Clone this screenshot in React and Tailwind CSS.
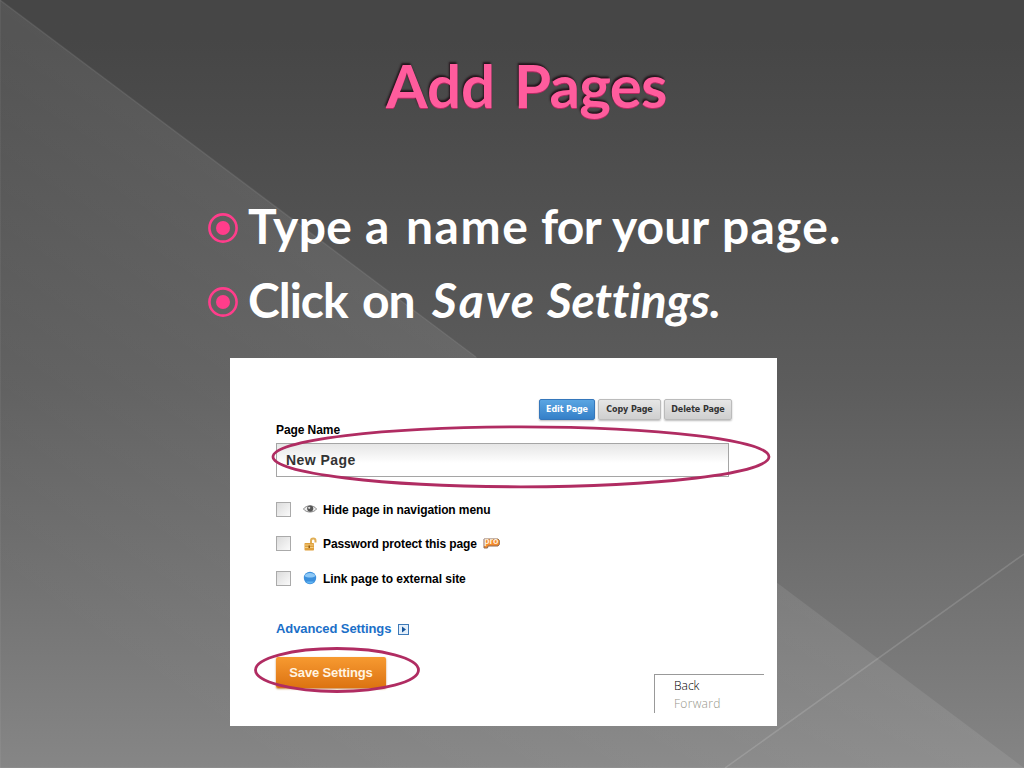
import React from 'react';

const Bullet = () => (
  <svg className="w-[30px] h-[30px] mt-[15px] mr-[10px] shrink-0" viewBox="0 0 30 30">
    <circle cx="15" cy="15" r="13.6" fill="none" stroke="#ff3d8b" strokeWidth="2.6" />
    <circle cx="15" cy="15" r="7" fill="#ff3d8b" />
  </svg>
);

const EyeIcon = () => (
  <svg className="w-[14px] h-[10px]" viewBox="0 0 14 10">
    <path d="M0.5 5C3 .8 11 .8 13.5 5C11 9 3 9 .5 5Z" fill="#eee" stroke="#888" strokeWidth="1" />
    <circle cx="7.2" cy="4.6" r="3.1" fill="#555" />
    <circle cx="6.2" cy="3.8" r="1.1" fill="#ddd" />
  </svg>
);

const LockIcon = () => (
  <svg className="w-[14px] h-[14px]" viewBox="0 0 14 14">
    <path d="M8 6.5V3.8C8 .8 12.5.8 12.5 3.8V5.5" fill="none" stroke="#e0ae55" strokeWidth="2" />
    <rect x="1.5" y="6" width="9.5" height="7.5" rx="0.8" fill="#dfa03c" />
    <path d="M2 8h8.5M2 10.5h8.5" stroke="#f3cf84" strokeWidth="1" />
    <rect x="5.5" y="8.5" width="1.5" height="2.5" fill="#8f5c18" />
  </svg>
);

const GlobeIcon = () => (
  <svg className="w-[14px] h-[14px]" viewBox="0 0 14 14">
    <circle cx="7" cy="7" r="6.2" fill="#3b8fdc" />
    <path d="M1.5 5C2.5 1 11.5 1 12.5 5C10 7 4 7 1.5 5Z" fill="#8dc8f6" />
    <path d="M3 10.5C5 13 9 13 11 10.5Z" fill="#63b6f3" />
  </svg>
);

const ProBadge = () => (
  <span className="relative ml-[6px] flex h-[11px] w-[17px] items-center justify-center">
    <svg className="absolute inset-0 w-full h-full" viewBox="0 0 17 11">
      <path d="M1 1H15L16.3 2.5V6.5L15 8H5L4.5 10H1Z" fill="#f58a2c" stroke="#8d6a55" strokeWidth="1" />
    </svg>
    <span className="relative -mt-[4px] text-[9px] leading-none font-bold text-[#fff1df]">pro</span>
  </span>
);

const OPTIONS = [
  { label: 'Hide page in navigation menu', icon: <EyeIcon />, spacing: 'tracking-[-0.09px]' },
  { label: 'Password protect this page', icon: <LockIcon />, spacing: 'tracking-[-0.11px]', badge: true },
  { label: 'Link page to external site', icon: <GlobeIcon />, spacing: 'tracking-[-0.05px]' }
];

const Background = () => (
  <svg className="absolute inset-0 w-full h-full" viewBox="0 0 1024 768">
    <defs>
      <linearGradient id="facet" gradientUnits="userSpaceOnUse" x1="400" y1="300" x2="130" y2="660">
        <stop offset="0" stopColor="#fff" stopOpacity="0.085" />
        <stop offset="1" stopColor="#fff" stopOpacity="0.01" />
      </linearGradient>
    </defs>
    <path d="M0 0L1024 768H0Z" fill="url(#facet)" />
    <path d="M0 0L476 357" stroke="#fff" strokeOpacity="0.08" strokeWidth="1.5" />
    <path d="M725 768L1024 554" stroke="#fff" strokeOpacity="0.14" strokeWidth="1.5" />
    <path d="M0.5 0V768M0 767.5H1024" stroke="#fff" strokeOpacity="0.05" />
  </svg>
);

const Panel = () => (
  <div className="relative ml-[230px] w-[547px] h-[368px] bg-white pl-[46px] pt-[41px] font-['Liberation_Sans',sans-serif] text-black">
    {/* Page actions */}
    <div className="flex gap-[3px] pl-[263px] font-['DejaVu_Sans',sans-serif] text-[8px] font-bold tracking-[-0.1px] text-[#333]">
      <button className="w-[56px] h-[21px] rounded-[2px] border border-[#3577bb] bg-linear-to-b from-[#5aa5e2] to-[#3580c8] text-white shadow-[0_1px_2px_#bbb]">Edit Page</button>
      <button className="w-[63px] h-[21px] rounded-[2px] border border-[#bbb] bg-linear-to-b from-[#e6e6e6] to-[#cfcfcf] shadow-[0_1px_2px_#bbb]">Copy Page</button>
      <button className="w-[68px] h-[21px] rounded-[2px] border border-[#bbb] bg-linear-to-b from-[#e6e6e6] to-[#cfcfcf] shadow-[0_1px_2px_#bbb]">Delete Page</button>
    </div>

    {/* Page name */}
    <div className="mt-[2px] h-[21px] text-[12px] leading-[16px] font-bold tracking-[-0.08px]">Page Name</div>
    <div className="flex w-[453px] h-[34px] items-center border border-[#a5a5a5] bg-linear-to-b from-[#e6e6e6] to-white to-60% pl-[9px] text-[14px] font-bold tracking-[0.45px] text-[#333]">New Page</div>

    {/* Options */}
    <div className="mt-[15px]">
      {OPTIONS.map((option) => (
        <div key={option.label} className="flex h-[34.5px] items-center">
          <span className="w-[15px] h-[15px] border border-[#aaa] bg-linear-to-br from-[#dcdcdc] to-[#fafafa]" />
          <span className="ml-[12px] flex w-[20px] items-center">{option.icon}</span>
          <span className={`pt-px text-[12px] font-bold whitespace-nowrap ${option.spacing}`}>{option.label}</span>
          {option.badge && <ProBadge />}
        </div>
      ))}
    </div>

    <div className="mt-[23.5px] flex h-[20px] items-center text-[13px] font-bold tracking-[-0.1px] text-[#1b6fc8]">
      Advanced Settings
      <svg className="ml-[7px] w-[11px] h-[11px]" viewBox="0 0 11 11">
        <rect x="0.5" y="0.5" width="10" height="10" fill="#e4effa" stroke="#3d79b8" />
        <path d="M4 2.5L8 5.5L4 8.5Z" fill="#17569c" />
      </svg>
    </div>
    <button className="mt-[18px] block w-[110px] h-[31px] rounded-[2px] bg-linear-to-b from-[#f79a30] to-[#dc7310] text-[13px] font-bold tracking-[-0.15px] text-[#fff4e2] shadow-[0_1px_2px_#c98a4a]">Save Settings</button>

    {/* Browser menu remnant */}
    <div className="absolute left-[424px] top-[316px] w-[110px] h-[39px] border-t border-l border-[#999] pl-[19px] pt-[2px] font-['Open_Sans',sans-serif] text-[12px] leading-[18px] font-light">
      <div className="text-black">Back</div>
      <div className="tracking-[0.3px] text-[#96968a]">Forward</div>
    </div>

    {/* Highlight rings */}
    <svg className="absolute inset-0 w-full h-full" viewBox="0 0 547 368" fill="none" stroke="#b02c62" strokeWidth="2.8">
      <ellipse cx="291" cy="98.8" rx="248" ry="30" />
      <ellipse cx="107" cy="312" rx="81.5" ry="21.5" />
    </svg>
  </div>
);

const App = () => {
  return (
    <div className="relative w-[1024px] h-[768px] overflow-hidden bg-linear-to-b from-[#464646] from-5% via-[#5c5c5c] via-50% to-[#858585] font-['Lato',sans-serif]">
      <Background />
      <div className="relative">
        <h1 className="flex h-[198px] pl-[386px] pt-[49px] text-[60px] leading-[72px] font-bold text-[#ff5c9d] [text-shadow:-1px_-2px_2px_#25151c,0_1px_0_#b52c65]">
          <span className="w-[128px] whitespace-nowrap">Add</span>
          <span className="whitespace-nowrap tracking-[-0.7px]">Pages</span>
        </h1>

        <ul className="h-[160px] pl-[208px] text-[48px] leading-[56px] font-bold text-white [font-variant-ligatures:none]">
          <li className="flex h-[74px]">
            <Bullet />
            <span className="w-[117px] whitespace-nowrap tracking-[0.3px]">Type</span>
            <span className="w-[41px]">a</span>
            <span className="w-[135px] whitespace-nowrap tracking-[1.5px]">name</span>
            <span className="w-[71px] whitespace-nowrap tracking-[-0.7px]">for</span>
            <span className="w-[110px] whitespace-nowrap">your</span>
            <span className="whitespace-nowrap tracking-[1.2px]">page.</span>
          </li>
          <li className="flex h-[74px]">
            <Bullet />
            <span className="w-[114px] whitespace-nowrap tracking-[-1px]">Click</span>
            <span className="w-[70px] whitespace-nowrap tracking-[-1px]">on</span>
            <em className="w-[115px] whitespace-nowrap tracking-[2px]">Save</em>
            <em className="whitespace-nowrap tracking-[-0.2px]">Settings.</em>
          </li>
        </ul>

        <Panel />
      </div>
    </div>
  );
};

export default App;
